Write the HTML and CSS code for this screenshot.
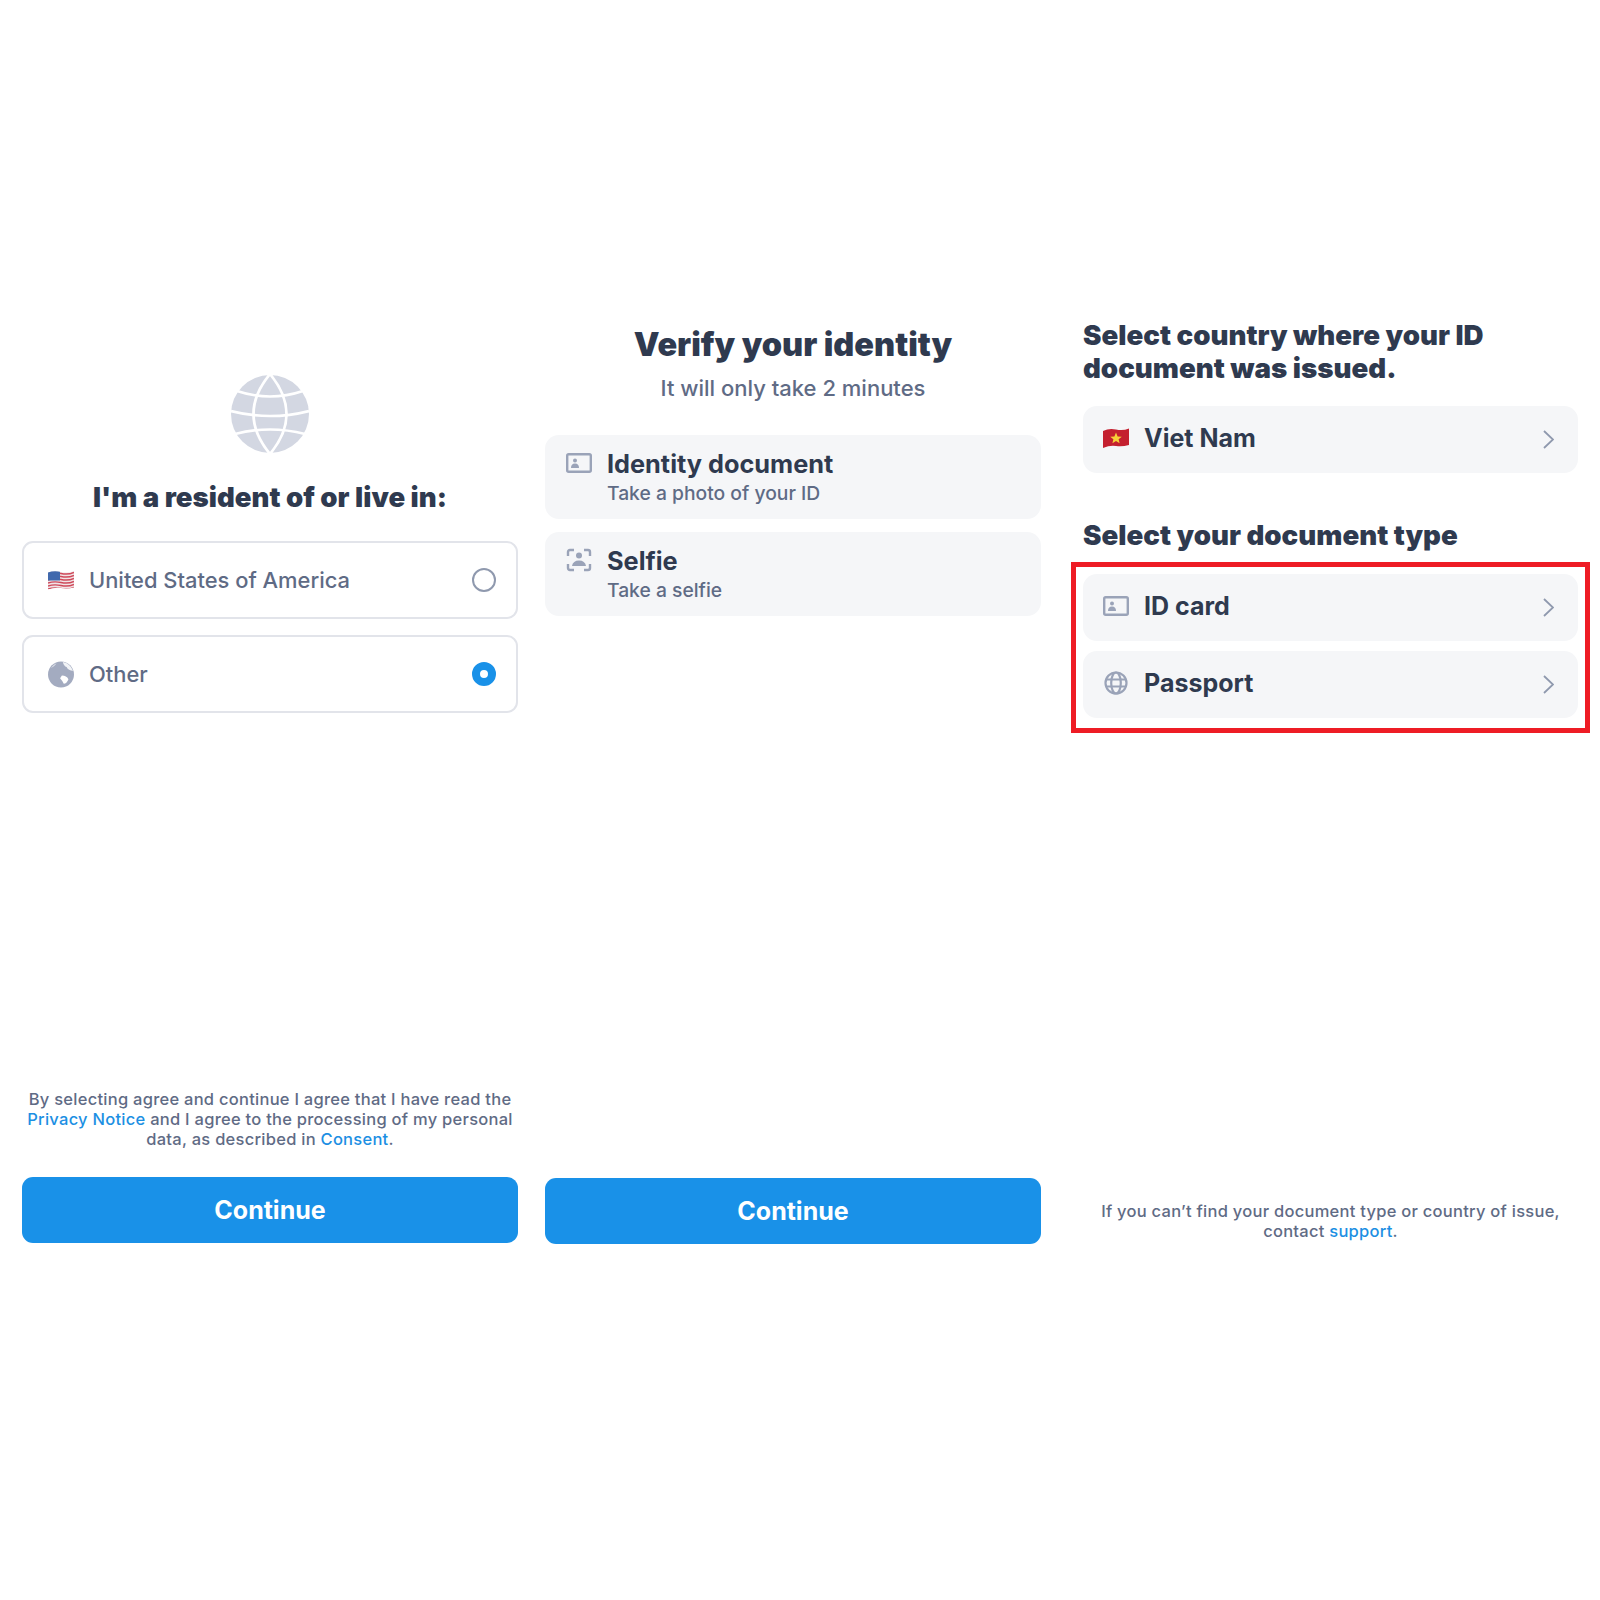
FILE: index.html
```html
<!DOCTYPE html>
<html lang="en">
<head>
  <meta charset="UTF-8" />
  <title>Identity verification</title>
  <link rel="stylesheet" href="styles.css">
</head>
<body>
  <main class="screens">

    <section class="panel panel-residence">
      <svg class="big-globe" viewBox="0 0 78 78">
        <circle cx="39" cy="39" r="39" fill="#d3d7e2" />
        <g fill="none" stroke="#fff" stroke-width="2.7">
          <path d="M39 -1 Q6 39 39 79 Q72 39 39 -1 Z" />
          <path d="M6 16 Q39 27 72 16" />
          <path d="M0 36 Q39 46 78 36" />
          <path d="M4 59 Q39 50 74 59" />
        </g>
      </svg>
      <h2 class="residence-title">I'm a resident of or live in:</h2>

      <div class="option">
        <svg class="option-icon" viewBox="0 0 26 20">
          <defs>
            <clipPath id="us-flag"><path d="M0 2 Q6 0 13 1.5 T26 0.5 V17 Q19 18.5 13 17.5 T0 19 Z" /></clipPath>
          </defs>
          <g clip-path="url(#us-flag)">
            <rect width="26" height="20" fill="#f1e4e6" />
            <path d="M0 3.5 Q6 1.5 13 3 T26 2 M0 6.5 Q6 4.5 13 6 T26 5 M0 9.5 Q6 7.5 13 9 T26 8 M0 12.5 Q6 10.5 13 12 T26 11 M0 15.5 Q6 13.5 13 15 T26 14 M0 18.5 Q6 16.5 13 18 T26 17" fill="none" stroke="#cf4a5b" stroke-width="1.4" />
            <rect width="12" height="10" fill="#4169ad" />
          </g>
        </svg>
        <span class="option-label">United States of America</span>
        <span class="radio"></span>
      </div>

      <div class="option">
        <svg class="option-icon" viewBox="0 0 28 28">
          <circle cx="14" cy="14" r="14" fill="#a3abc0" />
          <path d="M16 0.5 Q24 2 27 10 Q22 10 20 6 Q17 5 16 0.5 Z" fill="#fff" opacity="0.85" />
          <path d="M15 15 Q20 15 22 19 Q20 24 17 24 Q15 20 13 18 Z" fill="#fff" />
          <path d="M3 7 Q6 3 9 2 Q8 5 3 7 Z" fill="#fff" opacity="0.6" />
        </svg>
        <span class="option-label">Other</span>
        <span class="radio radio-on"></span>
      </div>

      <div class="bottom">
        <p class="note">By selecting agree and continue I agree that I have read the <a>Privacy Notice</a> and I agree to the processing of my personal data, as described in <a>Consent</a>.</p>
        <button class="continue">Continue</button>
      </div>
    </section>

    <section class="panel panel-verify">
      <h1 class="verify-title">Verify your identity</h1>
      <p class="verify-sub">It will only take 2 minutes</p>

      <div class="step">
        <svg class="step-icon" viewBox="0 0 26 20">
          <rect x="1.2" y="1.2" width="23.6" height="17.6" rx="1.5" fill="none" stroke="#9aa3b8" stroke-width="2.4" />
          <circle cx="9" cy="7.5" r="2" fill="#9aa3b8" />
          <path d="M5 15 Q5 10.5 9 10.5 Q13 10.5 13 15 Z" fill="#9aa3b8" />
        </svg>
        <div>
          <div class="step-name">Identity document</div>
          <div class="step-hint">Take a photo of your ID</div>
        </div>
      </div>

      <div class="step">
        <svg class="step-icon" viewBox="0 0 26 24">
          <path d="M2 8 V4 Q2 2 4 2 H8 M18 2 H22 Q24 2 24 4 V8 M24 16 V20 Q24 22 22 22 H18 M8 22 H4 Q2 22 2 20 V16" fill="none" stroke="#9aa3b8" stroke-width="2.4" />
          <circle cx="13" cy="7.5" r="3" fill="#9aa3b8" />
          <path d="M6 18 Q7 12.5 13 12.5 Q19 12.5 20 18 Z" fill="#9aa3b8" />
        </svg>
        <div>
          <div class="step-name">Selfie</div>
          <div class="step-hint">Take a selfie</div>
        </div>
      </div>

      <div class="bottom">
        <button class="continue">Continue</button>
      </div>
    </section>

    <section class="panel panel-document">
      <h2 class="doc-title">Select country where your ID document was issued.</h2>

      <div class="row">
        <svg class="row-icon" viewBox="0 0 26 20">
          <path d="M0 3 Q6 0 13 1.5 T26 0.5 V17 Q19 19 13 18 T0 20 Z" fill="#c4202f" />
          <path d="M13 4.5 L14.6 8.4 L18.8 8.7 L15.6 11.3 L16.6 15.3 L13 13.1 L9.4 15.3 L10.4 11.3 L7.2 8.7 L11.4 8.4 Z" fill="#f7d038" />
        </svg>
        <span class="row-label">Viet Nam</span>
        <svg class="chevron" viewBox="0 0 11 19"><path d="M1 1 L10 9.5 L1 18" /></svg>
      </div>

      <h2 class="doc-title doc-title-second">Select your document type</h2>

      <div class="doc-types">
        <div class="row">
          <svg class="row-icon" viewBox="0 0 26 20">
            <rect x="1.2" y="1.2" width="23.6" height="17.6" rx="1.5" fill="none" stroke="#9aa3b8" stroke-width="2.4" />
            <circle cx="9" cy="7.5" r="2" fill="#9aa3b8" />
            <path d="M5 15 Q5 10.5 9 10.5 Q13 10.5 13 15 Z" fill="#9aa3b8" />
          </svg>
          <span class="row-label">ID card</span>
          <svg class="chevron" viewBox="0 0 11 19"><path d="M1 1 L10 9.5 L1 18" /></svg>
        </div>
        <div class="row">
          <svg class="row-icon" viewBox="0 0 26 24">
            <g fill="none" stroke="#9aa3b8" stroke-width="2.2">
              <circle cx="13" cy="12" r="10.5" />
              <ellipse cx="13" cy="12" rx="4.8" ry="10.5" />
              <path d="M3.5 8.5 H22.5 M3.5 15.5 H22.5" />
            </g>
          </svg>
          <span class="row-label">Passport</span>
          <svg class="chevron" viewBox="0 0 11 19"><path d="M1 1 L10 9.5 L1 18" /></svg>
        </div>
        <div class="highlight"></div>
      </div>

      <div class="bottom">
        <p class="note note-support">If you can’t find your document type or country of issue, contact <a>support</a>.</p>
      </div>
    </section>

  </main>
</body>
</html>
```

FILE: styles.css
```css
body {
  margin: 0;
  background: #fff;
  font-family: Inter, "Liberation Sans", sans-serif;
  color: #2f3a4f;
}
h1, h2, p {
  margin: 0;
}
a {
  color: #1c8fe3;
}

.screens {
  display: flex;
  padding: 300px 0 356px 22px;
}
.panel {
  display: flex;
  flex-direction: column;
  flex: none;
  width: 496px;
  height: 944px;
}
.panel-verify {
  margin-left: 27px;
}
.panel-document {
  width: 495px;
  margin-left: 42px;
}
.bottom {
  margin-top: auto;
}

/* first screen */
.panel-residence .bottom {
  margin-bottom: 1px;
}
.big-globe {
  width: 78px;
  height: 78px;
  align-self: center;
  margin-top: 75px;
}
.residence-title {
  margin-top: 26px;
  font-size: 27.6px;
  line-height: 36px;
  font-weight: 900;
  text-align: center;
}
.option {
  display: flex;
  align-items: center;
  height: 74px;
  margin-top: 16px;
  padding: 0 20px 0 24px;
  border: 2px solid #e2e4ea;
  border-radius: 11px;
}
.residence-title + .option {
  margin-top: 26px;
}
.option-icon {
  width: 26px;
  height: 27px;
}
.option-label {
  margin-left: 15px;
  font-size: 21.9px;
  font-weight: 500;
  color: #5f6b85;
}
.radio {
  width: 20px;
  height: 20px;
  margin-left: auto;
  border: 2px solid #8f99ae;
  border-radius: 50%;
}
.radio-on {
  width: 8px;
  height: 8px;
  border: 8px solid #1991e8;
  background: #fff;
}
.note {
  font-size: 16.5px;
  line-height: 20px;
  font-weight: 500;
  text-align: center;
  color: #5f6b85;
  letter-spacing: 0.26px;
}
.continue {
  display: block;
  width: 100%;
  height: 66px;
  margin-top: 28px;
  border: 0;
  border-radius: 11px;
  background: #1991e8;
  color: #fff;
  font-family: inherit;
  font-size: 25px;
  font-weight: 700;
}

/* second screen */
.verify-title {
  margin-top: 25px;
  font-size: 32.5px;
  line-height: 40px;
  font-weight: 900;
  text-align: center;
}
.verify-sub {
  margin-top: 9px;
  font-size: 22px;
  line-height: 28px;
  font-weight: 500;
  text-align: center;
  color: #5f6b85;
}
.step {
  display: flex;
  align-items: flex-start;
  height: 83.5px;
  box-sizing: border-box;
  margin-bottom: 13.5px;
  padding: 13.5px 21px;
  border-radius: 14px;
  background: #f5f6f8;
}
.verify-sub + .step {
  margin-top: 33px;
}
.step-icon {
  width: 26px;
  height: 24px;
  margin-top: 2px;
}
.step-name {
  margin-left: 15px;
  font-size: 25.3px;
  line-height: 30px;
  font-weight: 700;
}
.step-hint {
  margin-left: 15px;
  margin-top: 1.5px;
  font-size: 19.3px;
  line-height: 26px;
  font-weight: 500;
  color: #5f6b85;
}

/* third screen */
.doc-title {
  margin-top: 19px;
  font-size: 27.7px;
  line-height: 33px;
  font-weight: 900;
}
.doc-title-second {
  margin-top: 46px;
  margin-bottom: 22px;
}
.row {
  display: flex;
  align-items: center;
  height: 67px;
  box-sizing: border-box;
  padding: 0 20px 3px;
  border-radius: 14px;
  background: #f5f6f8;
}
.doc-title + .row {
  margin-top: 21px;
}
.row + .row {
  margin-top: 10px;
}
.row-icon {
  width: 26px;
  height: 24px;
}
.row-label {
  margin-left: 15px;
  font-size: 25px;
  font-weight: 700;
}
.chevron {
  width: 11px;
  height: 19px;
  margin: 3px 4px 0 auto;
  fill: none;
  stroke: #8f99ae;
  stroke-width: 1.8;
}
.doc-types {
  position: relative;
}
.highlight {
  position: absolute;
  top: -12px;
  left: -12px;
  right: -12px;
  bottom: -15px;
  border: 5px solid #ee1c25;
}
.note-support {
  margin-bottom: 3px;
  padding: 0 10px;
}
```
